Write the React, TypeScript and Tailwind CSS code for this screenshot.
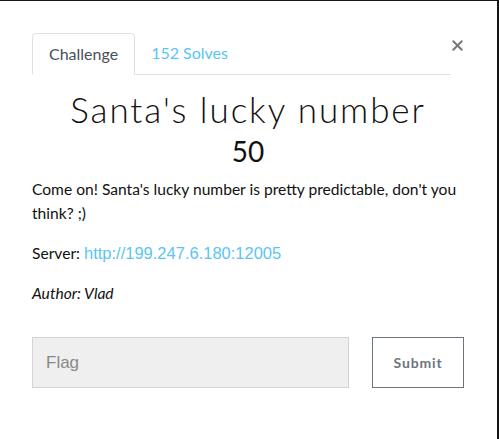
import { X } from "lucide-react";

const lato = { fontFamily: "Lato, 'Noto Sans', sans-serif" };

export default function App() {
  return (
    <div className="w-[499px] h-[439px] bg-[#141414] pt-px pr-[2px]">
      <div className="h-full bg-white pl-8 pr-[33px] pt-8 text-[#111]" style={lato}>
        {/* Tabs */}
        <div className="flex items-start">
          <ul className="flex flex-1 border-b border-[#dee2e6]">
            <li className="-mb-px rounded-t border border-[#dee2e6] border-b-white bg-white px-4 py-2 text-base leading-6 text-[#495057]">
              Challenge
            </li>
            <li className="px-4 py-2 text-base leading-6 text-[#5bc4f5]">152 Solves</li>
          </ul>
          <button className="mt-[5px] flex h-[14px] w-[13px] items-center justify-center text-[#777]">
            <X className="h-[17px] w-[17px] shrink-0" strokeWidth={2.8} />
          </button>
        </div>

        {/* Header */}
        <h3 className="mt-[14px] text-center font-light text-[35px] leading-[40px] tracking-[0.055em] text-[#111]">
          Santa's lucky number
        </h3>
        <h4 className="mt-[5px] text-center text-[28px] leading-[34px]">50</h4>

        {/* Description */}
        <div className="mt-[9px] text-[15.6px] leading-6">
          <p>Come on! Santa's lucky number is pretty predictable, don't you think? ;)</p>
          <p className="mt-4">
            Server:{" "}
            <a className="text-[16.5px] text-[#5bc4f5]" style={{ fontFamily: "'Liberation Sans', Arial, sans-serif" }}>
              http://199.247.6.180:12005
            </a>
          </p>
          <p className="mt-4 italic">Author: Vlad</p>
        </div>

        {/* Submit row */}
        <div className="mt-[32px] flex items-start">
          <input
            placeholder="Flag"
            className="h-[51px] w-[317px] border border-[#ced4da] bg-[#efefef] px-[13px] text-[17px] placeholder:text-[#8a8a8a] outline-none"
            style={{ fontFamily: "'Liberation Sans', Arial, sans-serif" }}
          />
          <button className="ml-auto h-[51px] w-[92px] border border-[#6c757d] text-[14px] font-bold tracking-[0.06em] text-[#6c757d]">
            Submit
          </button>
        </div>
      </div>
    </div>
  );
}
